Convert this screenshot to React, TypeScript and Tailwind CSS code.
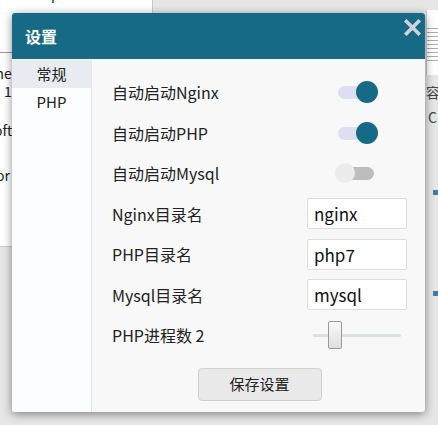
import { useState } from 'react'

const font = { fontFamily: '"Noto Sans CJK SC", "Noto Sans", sans-serif' }

function Toggle({ on }: { on: boolean }) {
  return (
    <div className="relative h-[22px] w-[40px]">
      <div
        className={
          on
            ? 'absolute left-0 top-[5px] h-[13px] w-[34px] rounded-full bg-[#dcdff0]'
            : 'absolute left-0 top-[5px] h-[13px] w-[36px] rounded-full bg-[#bdbdbd]'
        }
      />
      {on ? (
        <div className="absolute right-0 top-0 h-[22px] w-[22px] rounded-full bg-[#176a85]" />
      ) : (
        <div className="absolute left-[-3px] top-[1px] h-[20px] w-[20px] rounded-full bg-[#ececec]" />
      )}
    </div>
  )
}

function TextBox({ value }: { value: string }) {
  return (
    <div className="flex h-[31px] w-[100px] items-center rounded-[2px] border border-[#dcdcdc] bg-white px-[6px] text-[17px] text-[#111]">
      {value}
    </div>
  )
}

function Row({ label, children }: { label: string; children: React.ReactNode }) {
  return (
    <div className="flex h-[40.5px] items-center justify-between">
      <span className="text-[16px] text-[#222]">{label}</span>
      {children}
    </div>
  )
}

export default function App() {
  const [tab, setTab] = useState('常规')

  return (
    <div className="relative h-[425px] w-[438px] overflow-hidden bg-[#e6e6e6]" style={font}>
      {/* desktop behind */}
      <div className="absolute left-0 top-0 h-[247px] w-[153px] border-b border-r border-[#c8c8c8] bg-white text-[14px] text-[#222]">
        <div className="absolute left-[52px] top-0 h-[3px] w-[2px] bg-[#2a9a2a]" />
        <div className="absolute left-[20px] top-[14px]">关</div>
        <div className="absolute left-0 top-[52px] h-px w-full bg-[#999]" />
        <div className="absolute left-[-9px] top-[63px]">me</div>
        <div className="absolute left-[4px] top-[81px]">1</div>
        <div className="absolute left-[-6px] top-[120px]">oft</div>
        <div className="absolute left-[-4px] top-[165px]">or</div>
      </div>
      <div className="absolute left-[426px] top-[10px] flex h-[65px] w-[20px] flex-col gap-[3px] border-l border-[#ccc] bg-white pt-[18px]">
        <div className="h-px bg-[#aaa]" />
        <div className="h-px bg-[#aaa]" />
        <div className="h-px bg-[#aaa]" />
        <div className="h-px bg-[#aaa]" />
        <div className="h-px bg-[#aaa]" />
        <div className="h-px bg-[#aaa]" />
        <div className="h-px bg-[#aaa]" />
        <div className="h-px bg-[#aaa]" />
        <div className="h-px bg-[#aaa]" />
      </div>
      <div className="absolute left-[426px] top-[82px] text-[14px] text-[#444]">容</div>
      <div className="absolute left-[428px] top-[107px] text-[14px] text-[#444]">C</div>
      <div className="absolute left-[433px] top-[190px] h-[5px] w-[5px] bg-[#3b7fa6]" />
      <div className="absolute left-[433px] top-[291px] h-[5px] w-[5px] bg-[#3b7fa6]" />

      {/* dialog */}
      <div className="absolute left-[12px] top-[13px] flex h-[399px] w-[413px] flex-col overflow-hidden rounded-[3px] bg-[#f8f8f8] shadow-[0_2px_10px_rgba(0,0,0,0.45)]">
        <div className="flex h-[46px] shrink-0 items-center justify-between bg-[#176a85] pl-[13px] pr-[4px]">
          <span className="text-[16px] font-bold text-white">设置</span>
          <svg width="17" height="17" viewBox="0 0 17 17" className="mb-[18px]">
            <path d="M2.5 2.5 L14.5 14.5 M14.5 2.5 L2.5 14.5" stroke="#cfd3dc" strokeWidth="3.6" strokeLinecap="square" />
          </svg>
        </div>
        <div className="flex flex-1">
          <div className="w-[80px] shrink-0 border-r border-[#e6e6e6] bg-[#fcfdff] pt-px">
            {['常规', 'PHP'].map((t) => (
              <div
                key={t}
                onClick={() => setTab(t)}
                className={
                  t === tab
                    ? 'flex h-[28px] items-center justify-center bg-[#e8ebef] text-[15px] text-[#222]'
                    : 'flex h-[28px] items-center justify-center text-[15px] text-[#222]'
                }
              >
                {t}
              </div>
            ))}
          </div>
          <div className="flex flex-1 flex-col pl-[20px] pr-[18px] pt-[13px]">
            <Row label="自动启动Nginx">
              <div className="mr-[29px]"><Toggle on /></div>
            </Row>
            <Row label="自动启动PHP">
              <div className="mr-[29px]"><Toggle on /></div>
            </Row>
            <Row label="自动启动Mysql">
              <div className="mr-[29px]"><Toggle on={false} /></div>
            </Row>
            <Row label="Nginx目录名">
              <TextBox value="nginx" />
            </Row>
            <Row label="PHP目录名">
              <TextBox value="php7" />
            </Row>
            <Row label="Mysql目录名">
              <TextBox value="mysql" />
            </Row>
            <Row label="PHP进程数 2">
              <div className="relative mr-[6px] flex h-[28px] w-[88px] items-center">
                <div className="h-[3px] w-full rounded-full bg-[#dcdfe0]" />
                <div className="absolute left-[15px] top-0 h-[28px] w-[14px] rounded-[2px] border border-[#999] bg-gradient-to-b from-[#fafafa] to-[#dedede]" />
              </div>
            </Row>
            <div className="mt-[12px] flex justify-center">
              <button className="h-[33px] w-[124px] rounded-[4px] border border-[#d0d0d0] bg-[#e9e9e9] text-[15px] text-[#222]">
                保存设置
              </button>
            </div>
          </div>
        </div>
      </div>
    </div>
  )
}
